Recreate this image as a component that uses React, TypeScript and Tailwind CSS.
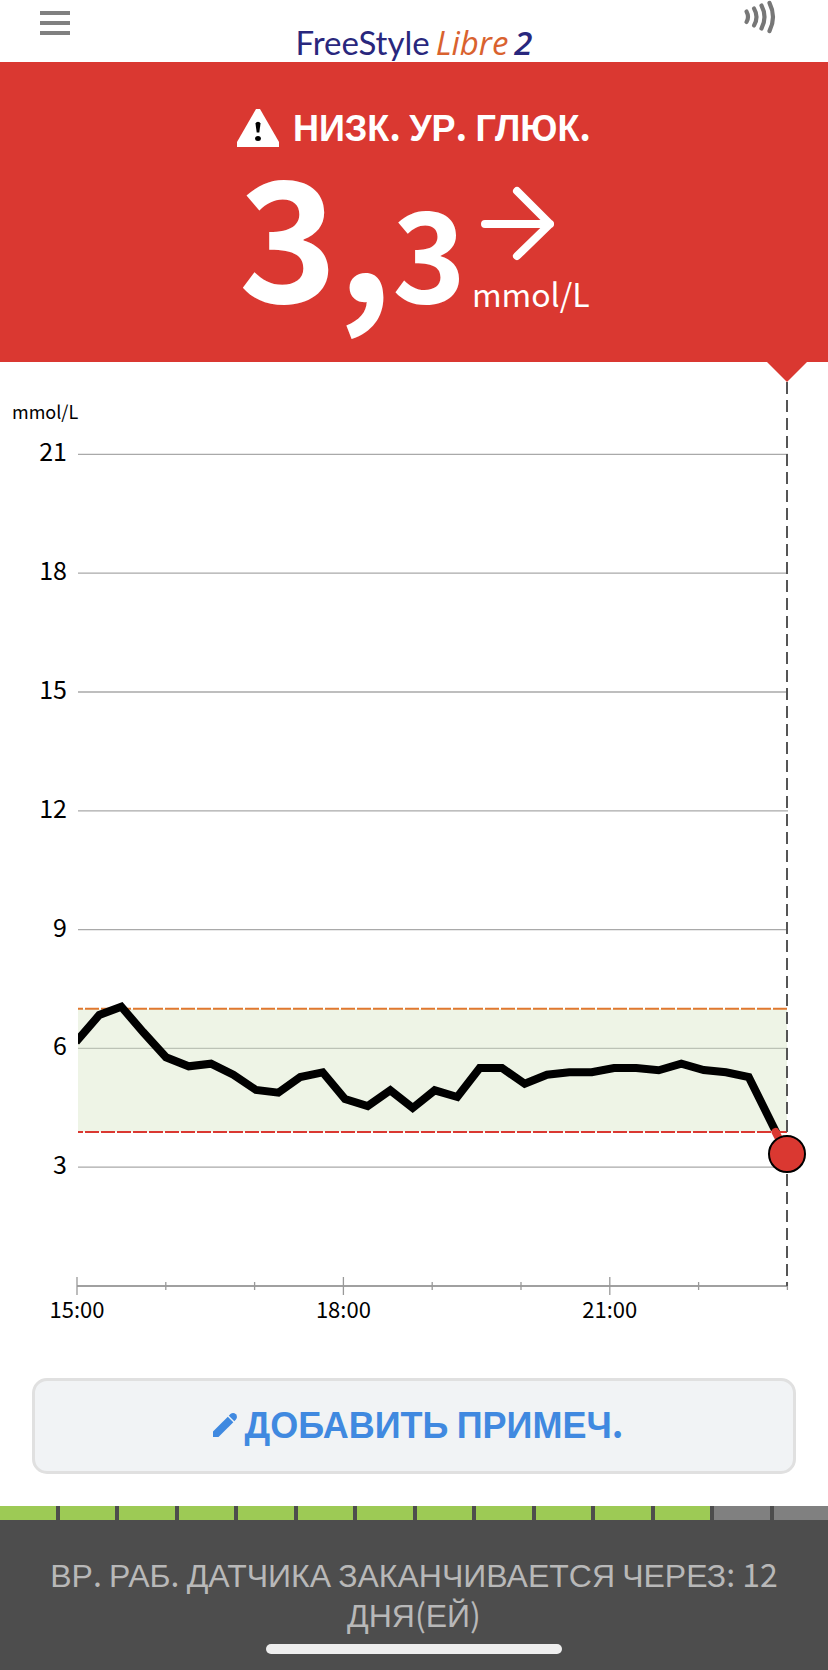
import React from "react";

const LATIN = "font-['Noto_Sans_CJK_SC','Noto_Sans',sans-serif]";
const CYRILLIC = "font-['Liberation_Sans',Arial,sans-serif]";

/* Sets Cyrillic letters in the grotesque face and everything else in the Latin face. */
function MixedText({ children }: { children: string }) {
  const runs = children.match(/[\u0400-\u04FF]+|[^\u0400-\u04FF]+/g) ?? [];
  return (
    <>
      {runs.map((run, i) => (
        <span key={i} className={`leading-none ${/[\u0400-\u04FF]/.test(run) ? CYRILLIC : LATIN}`}>
          {run}
        </span>
      ))}
    </>
  );
}

function Header() {
  return (
    <header className="grid h-[62px] grid-cols-[1fr_auto_1fr] items-start px-10">
      <button type="button" aria-label="Меню" className="flex w-[30px] flex-col gap-[6px] pt-[11px]">
        <span className="h-1 w-full bg-[#808080]" />
        <span className="h-1 w-full bg-[#808080]" />
        <span className="h-1 w-full bg-[#808080]" />
      </button>
      <div className="flex items-baseline justify-center gap-[6px] pt-[22px] whitespace-nowrap text-[#29277d]">
        <span className="font-['Lato',sans-serif] text-[33px] leading-10">FreeStyle</span>
        <span className="font-['Open_Sans',sans-serif] text-[33px] leading-10 font-medium text-[#d9622f] italic">Libre</span>
        <span className="font-['Open_Sans',sans-serif] text-[33px] leading-10 font-semibold italic">2</span>
      </div>
      <button type="button" aria-label="Сканировать" className="justify-self-end pr-3">
        <svg width="34" height="34" viewBox="0 0 34 34" fill="none" stroke="#777" strokeWidth="4.200" strokeLinecap="round">
          <path d="M4.500 11.500Q7.500 17 4.500 22" />
          <path d="M12 8.500Q17 17 12 25.500" />
          <path d="M19.500 5.500Q25.500 17 19.500 28.500" />
          <path d="M27.500 3Q34.500 17 27.500 31" />
        </svg>
      </button>
    </header>
  );
}

function Banner() {
  return (
    <section className="flex h-[300px] flex-col items-center bg-[#da3831] pt-[44px] text-white">
      <h1 className="flex items-center gap-[14px] text-[36px] leading-[44px] font-bold">
        <svg width="42" height="38" viewBox="0 0 42 38">
          <path d="M19 0H23L42 33V38H0V33Z" fill="#fff" />
          <path d="M18.500 14.500A2.700 2.700 0 0 1 23.500 14.500L22.300 23.500H19.700Z" fill="#000" />
          <ellipse cx="21" cy="29.500" rx="2.900" ry="2.500" fill="#000" />
        </svg>
        <span>
          <MixedText>НИЗК. УР. ГЛЮК.</MixedText>
        </span>
      </h1>
      <div className={`${LATIN} flex gap-[6px] pt-4`}>
        <p className="text-[168px] leading-[128px] font-bold">
          3,<span className="text-[125px]">3</span>
        </p>
        <div className="flex flex-col pt-5">
          <svg width="82" height="76" viewBox="0 0 82 76" fill="none" stroke="#fff" strokeWidth="8" strokeLinecap="round" strokeLinejoin="round">
            <path d="M13 38H78M45 5L78 38L45 70" />
          </svg>
          <span className="text-[32px] leading-[62px]">mmol/L</span>
        </div>
      </div>
    </section>
  );
}

const TRACE =
  "76,680 99.300,653 121.300,644.700 143.300,670.300 166,695.300 188.700,704.300 211,701.700 233.300,712.700 256,728 278.300,730.700 300.300,715 322.700,710.300 345,737 367.700,744 390.300,728.300 412.700,746 434.700,728.300 457.300,735 479.700,706 502,706 524.700,721.700 547,712.700 569.300,710.300 591.700,710.300 614,706 636.300,706 658.700,708.300 681.300,701.700 703.700,708 726,710.300 748.700,715 775.500,769 787,792";

const ZERO_Y = 924;
const STEP = 118.8;
const HOUR = 88.8;

function Chart() {
  return (
    <svg viewBox="0 0 828 980" className={`${LATIN} block w-full`} role="img" aria-label="График глюкозы">
      <defs>
        <clipPath id="plot">
          <rect x="78" y="0" width="750" height="769" />
        </clipPath>
      </defs>
      <text x="12" y="57" fontSize="18">mmol/L</text>
      <rect x="78" y="647" width="709" height="123" fill="#eef4e6" />
      {[3, 6, 9, 12, 15, 18, 21].map((value) => {
        const y = ZERO_Y - (value / 3) * STEP;
        return (
          <g key={value}>
            <line x1="78" x2="788" y1={y} y2={y} stroke={value === 6 ? "#bcc2b6" : "#a9a9a9"} strokeWidth="1.3" />
            <text x="67" y={y + 7} fontSize="25" textAnchor="end">{value}</text>
          </g>
        );
      })}
      <line x1="78" x2="787" y1="646.700" y2="646.700" stroke="#e0782f" strokeWidth="2" strokeDasharray="14 2" strokeDashoffset="9" />
      <line x1="78" x2="787" y1="770" y2="770" stroke="#da3831" strokeWidth="2" strokeDasharray="14 2" strokeDashoffset="9" />
      <line x1="77" x2="788" y1={ZERO_Y} y2={ZERO_Y} stroke="#a0a0a0" strokeWidth="2" />
      {Array.from({ length: 9 }, (_, i) => {
        const x = 77 + i * HOUR;
        const reach = i % 3 === 0 ? 9 : 4;
        return <line key={i} x1={x} x2={x} y1={ZERO_Y - reach} y2={ZERO_Y + reach} stroke="#999" strokeWidth="1.3" />;
      })}
      {["15:00", "18:00", "21:00"].map((label, i) => (
        <text key={label} x={77 + i * HOUR * 3} y="956" fontSize="22" textAnchor="middle">{label}</text>
      ))}
      <line x1="787" x2="787" y1="20" y2="924" stroke="#555" strokeWidth="2" strokeDasharray="12 6" />
      <path d="M767 0H807L787 20Z" fill="#da3831" />
      <polyline points={TRACE} fill="none" stroke="#000" strokeWidth="8" clipPath="url(#plot)" />
      <path d="M775.500 770L787 792" stroke="#da3831" strokeWidth="8" strokeLinecap="round" />
      <circle cx="787" cy="792" r="18" fill="#da3831" stroke="#000" strokeWidth="2" />
    </svg>
  );
}

function AddNote() {
  return (
    <div className="px-8 pt-9 pb-8">
      <button
        type="button"
        className="flex h-24 w-full items-center justify-center gap-2 rounded-[15px] border-3 border-[#e0e0e0] bg-[#f1f3f5] pb-[2px] pl-2 text-[36px] font-bold text-[#4089e0]"
      >
        <svg width="24" height="24" viewBox="0 0 24 24" fill="currentColor">
          <path d="M0 18.500L14.800 3.700L20.300 9.200L5.500 24H0Z" />
          <path d="M15.800 2.700L17.400 1.100Q20.200 -1 22.900 1.300Q25 4 22.900 6.600L21.300 8.200Z" />
        </svg>
        <span>
          <MixedText>ДОБАВИТЬ ПРИМЕЧ.</MixedText>
        </span>
      </button>
    </div>
  );
}

const DAYS = 14;
const DAYS_LEFT = 12;

function SensorFooter() {
  return (
    <footer className="flex flex-col items-center bg-[#4d4d4d] pb-4">
      <div className="grid h-[14px] w-full grid-cols-[repeat(13,minmax(0,1fr))_54px]">
        {Array.from({ length: DAYS }, (_, i) => (
          <div
            key={i}
            className={`border-r-4 border-[#4d4d4d] last:border-r-0 ${i < DAYS_LEFT ? "bg-[#9dca55]" : "bg-[#808080]"}`}
          />
        ))}
      </div>
      <p className="px-8 pt-[35px] text-center text-[32px] leading-10 text-[#b8b8b8]">
        <MixedText>ВР. РАБ. ДАТЧИКА ЗАКАНЧИВАЕТСЯ ЧЕРЕЗ: 12 ДНЯ(ЕЙ)</MixedText>
      </p>
      <div className="mt-[9px] h-[10px] w-[296px] rounded-full bg-[#eee]" />
    </footer>
  );
}

export default function App() {
  return (
    <div className="bg-white text-black">
      <Header />
      <main>
        <Banner />
        <Chart />
        <AddNote />
      </main>
      <SensorFooter />
    </div>
  );
}
